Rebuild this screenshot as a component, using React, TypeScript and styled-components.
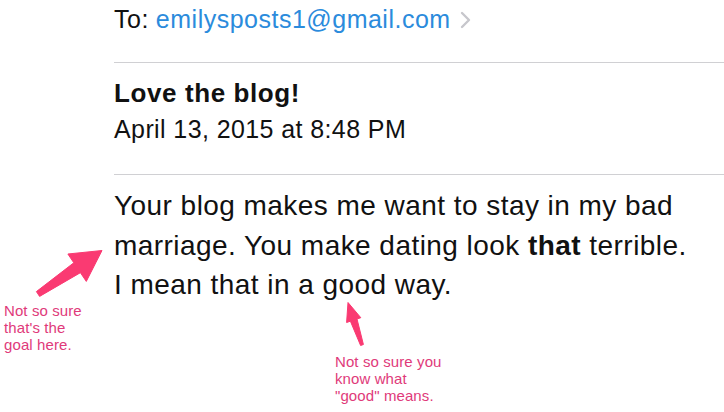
import React from "react";
import styled, { createGlobalStyle } from "styled-components";

const GlobalStyle = createGlobalStyle`
  html, body {
    margin: 0;
    padding: 0;
    background: #ffffff;
  }
  body {
    font-family: "Liberation Sans", Arial, sans-serif;
  }
`;

const Page = styled.div`
  position: relative;
  width: 724px;
  height: 412px;
  overflow: hidden;
  background: #ffffff;
  font-family: "Liberation Sans", Arial, sans-serif;
  color: #111111;
`;

const Mail = styled.div`
  display: flex;
  flex-direction: column;
  padding-left: 114px;
`;

const ToRow = styled.div`
  display: flex;
  align-items: center;
  padding: 3px 0 27px;
  font-size: 25px;
  line-height: 32px;
  letter-spacing: 0.5px;
  white-space: nowrap;
`;

const Label = styled.span`
  color: #111111;
  margin-right: 7px;
`;

const Address = styled.span`
  color: #2b8bdc;
`;

const Chevron = styled.svg`
  margin-left: 9px;
  margin-top: 1px;
  flex: none;
`;

const Section = styled.div<{ $top: number; $bottom: number }>`
  display: flex;
  flex-direction: column;
  border-top: 1px solid #d0d0d3;
  padding-top: ${(p) => p.$top}px;
  padding-bottom: ${(p) => p.$bottom}px;
`;

const Subject = styled.div`
  font-size: 26px;
  line-height: 36px;
  font-weight: 700;
  letter-spacing: 0.6px;
  white-space: nowrap;
`;

const DateLine = styled.div`
  font-size: 25px;
  line-height: 37px;
  letter-spacing: 0.4px;
  white-space: nowrap;
`;

const BodyLine = styled.div`
  font-size: 28px;
  line-height: 39.5px;
  letter-spacing: 0.45px;
  white-space: nowrap;
`;

const Strong = styled.b`
  font-weight: 700;
`;

const Note = styled.div<{ $left: number; $top: number }>`
  position: absolute;
  left: ${(p) => p.$left}px;
  top: ${(p) => p.$top}px;
  font-size: 15px;
  line-height: 17px;
  letter-spacing: 0.1px;
  color: #e03a7a;
  white-space: nowrap;
`;

const Overlay = styled.svg`
  position: absolute;
  left: 0;
  top: 0;
  pointer-events: none;
`;

export default function App() {
  return (
    <Page>
      <GlobalStyle />
      <Mail>
        <ToRow>
          <Label>To:</Label>
          <Address>emilysposts1@gmail.com</Address>
          <Chevron width="11" height="18" viewBox="0 0 11 18">
            <polyline
              points="2,2 9,9 2,16"
              fill="none"
              stroke="#c7c7cc"
              strokeWidth="2.4"
              strokeLinecap="round"
              strokeLinejoin="round"
            />
          </Chevron>
        </ToRow>
        <Section $top={12} $bottom={26}>
          <Subject>Love the blog!</Subject>
          <DateLine>April 13, 2015 at 8:48 PM</DateLine>
        </Section>
        <Section $top={11} $bottom={0}>
          <BodyLine>Your blog makes me want to stay in my bad</BodyLine>
          <BodyLine>
            marriage. You make dating look <Strong>that</Strong> terrible.
          </BodyLine>
          <BodyLine>I mean that in a good way.</BodyLine>
        </Section>
      </Mail>

      <Overlay width="724" height="412" viewBox="0 0 724 412">
        <polygon
          fill="#fa3a72"
          strokeLinejoin="round"
          stroke="#fa3a72"
          strokeWidth="1"
          points="102,250.5 86.3,281.4 80.4,272.7 39.6,296.4 36.4,291.6 73.8,262.8 67.9,254"
        />
        <polygon
          fill="#fa3a72"
          stroke="#fa3a72"
          strokeWidth="1"
          strokeLinejoin="round"
          points="348,302.5 360.8,317.7 357,319 363.4,344.5 360.6,345.5 350.4,321.2 346.6,322.5"
        />
      </Overlay>

      <Note $left={4} $top={302}>
        Not so sure
        <br />
        that's the
        <br />
        goal here.
      </Note>
      <Note $left={335} $top={353}>
        Not so sure you
        <br />
        know what
        <br />
        "good" means.
      </Note>
    </Page>
  );
}
